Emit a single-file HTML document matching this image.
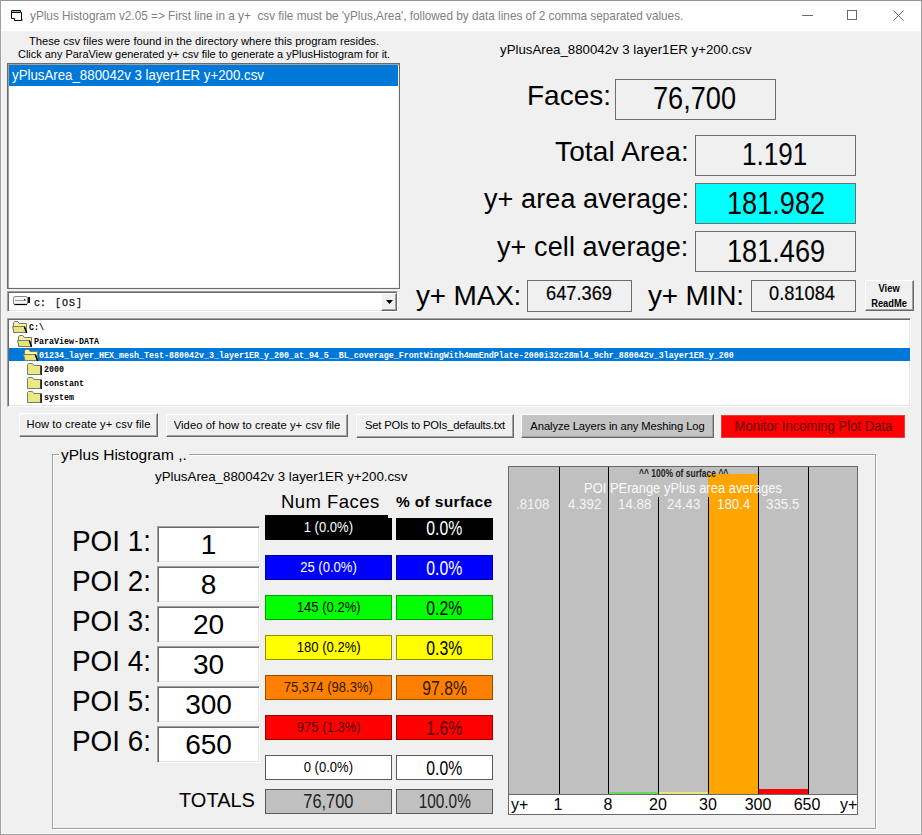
<!DOCTYPE html>
<html><head><meta charset="utf-8">
<style>
*{box-sizing:border-box;margin:0;padding:0}
html,body{width:922px;height:835px;overflow:hidden;background:#f0f0f0;font-family:"Liberation Sans",sans-serif;}
.a{position:absolute;white-space:pre}
#win{position:absolute;left:0;top:0;width:922px;height:835px;background:#f0f0f0}
#title{position:absolute;left:0;top:0;width:922px;height:31px;background:#fff}
.box{position:absolute;border:1px solid #6d6d6d;background:#f0f0f0;text-align:center;color:#000}
.btn{position:absolute;background:#f0f0f0;border-top:1px solid #fff;border-left:1px solid #fff;border-right:1px solid #696969;border-bottom:1px solid #696969;box-shadow:inset -1px -1px 0 #a0a0a0;font-size:11.2px;text-align:center;color:#000}
.sunk{position:absolute;background:#fff;border-top:1px solid #a0a0a0;border-left:1px solid #a0a0a0;border-right:1px solid #fff;border-bottom:1px solid #fff;box-shadow:inset 1px 1px 0 #696969, inset -1px -1px 0 #e3e3e3}
.lbl{position:absolute;white-space:pre;color:#000}
.bar{position:absolute;border:1px solid #7a7a7a;text-align:center;white-space:pre}
.vl{position:absolute;width:1px;background:#000}
.mono{font-family:"Liberation Mono",monospace;font-weight:bold;font-size:8.33px;color:#000}
</style></head><body>
<div id="win"></div>
<div id="title"></div>
<div style="position:absolute;left:1px;top:31px;width:1px;height:803px;background:#f8f8f8"></div>
<div style="position:absolute;left:920px;top:31px;width:1px;height:803px;background:#f8f8f8"></div>
<div style="position:absolute;left:1px;top:833px;width:920px;height:1px;background:#f8f8f8"></div>
<div style="position:absolute;left:0;top:0;width:922px;height:1px;background:#959595"></div>
<div style="position:absolute;left:0;top:0;width:1px;height:835px;background:#a0a0a0"></div>
<div style="position:absolute;left:921px;top:0;width:1px;height:835px;background:#a0a0a0"></div>
<div style="position:absolute;left:0;top:834px;width:922px;height:1px;background:#a0a0a0"></div>

<!-- title icon -->
<svg class="a" style="left:10px;top:9px" width="14" height="13" viewBox="0 0 14 13">
<path d="M1.5 1.5 H10.5 V3.5 H11.5 V11.5 H4.5 V9.5 H1.5 Z" fill="#fff" stroke="#000" stroke-width="1"/>
<path d="M2 2.5 H10" stroke="#6cc" stroke-width="1"/>
<path d="M2 3.5 H10" stroke="#000" stroke-width="1"/>
<path d="M12 10 L13 11 L12 12" fill="none" stroke="#888" stroke-width="0.8"/>
</svg>
<div class="lbl" style="left:30px;top:9px;font-size:12.2px;color:#808080;transform:scaleX(0.966);transform-origin:0 0">yPlus Histogram v2.05 =&gt; First line in a y+  csv file must be 'yPlus,Area', followed by data lines of 2 comma separated values.</div>
<!-- window buttons -->
<div style="position:absolute;left:802px;top:15px;width:11px;height:1px;background:#6a6a6a"></div>
<div style="position:absolute;left:847px;top:10px;width:10px;height:10px;border:1px solid #6a6a6a"></div>
<svg class="a" style="left:893px;top:10px" width="11" height="11" viewBox="0 0 11 11"><path d="M0.5 0.5 L10.5 10.5 M10.5 0.5 L0.5 10.5" stroke="#6a6a6a" stroke-width="1"/></svg>

<!-- left instructions -->
<div class="lbl" style="left:29px;top:35px;font-size:11.2px">These csv files were found in the directory where this program resides.</div>
<div class="lbl" style="left:18px;top:48px;font-size:10.95px">Click any ParaView generated y+ csv file to generate a yPlusHistogram for it.</div>

<!-- file listbox -->
<div style="position:absolute;left:7px;top:63px;width:393px;height:226px;background:#fff;border:1px solid #6a6a6a;box-shadow:inset 1px 1px 0 #a0a0a0, inset -1px -1px 0 #f0f0f0"></div>
<div style="position:absolute;left:9px;top:65px;width:389px;height:21px;background:#0078d7"></div>
<div class="lbl" style="left:12px;top:67px;font-size:14px;color:#fff;transform:scaleX(0.948);transform-origin:0 0">yPlusArea_880042v 3 layer1ER y+200.csv</div>

<!-- right panel -->
<div class="lbl" style="left:500px;top:42px;font-size:13.6px;transform:scaleX(0.975);transform-origin:0 0">yPlusArea_880042v 3 layer1ER y+200.csv</div>
<div class="lbl" style="left:527px;top:80px;font-size:28px">Faces:</div>
<div class="box" style="left:615px;top:79px;width:161px;height:41px"></div>

<div class="lbl" style="left:555px;top:136px;font-size:28px;letter-spacing:0.15px">Total Area:</div>
<div class="box" style="left:695px;top:135px;width:161px;height:41px"></div>
<div class="lbl" style="left:484px;top:184px;font-size:27px;letter-spacing:0.1px">y+ area average:</div>
<div class="box" style="left:695px;top:183px;width:161px;height:41px;background:#00ffff"></div>
<div class="lbl" style="left:497px;top:232px;font-size:27px;letter-spacing:0.1px">y+ cell average:</div>
<div class="box" style="left:695px;top:231px;width:161px;height:41px"></div>

<div class="lbl" style="left:416px;top:280px;font-size:28px;letter-spacing:-0.2px">y+ MAX:</div>
<div class="box" style="left:527px;top:280px;width:105px;height:32px"></div>
<div class="lbl" style="left:648px;top:280px;font-size:28px;letter-spacing:-0.2px">y+ MIN:</div>
<div class="box" style="left:751px;top:280px;width:105px;height:32px"></div>
<div class="btn" style="left:865px;top:280px;width:49px;height:31px"></div><div class="lbl" style="left:865px;top:281px;width:49px;text-align:center;font-size:11px;font-weight:bold;line-height:14.5px"><span style="display:inline-block;transform:scaleX(0.85)">View<br>ReadMe</span></div>

<!-- drive combo -->
<div class="sunk" style="left:7px;top:291px;width:391px;height:21px"></div>
<div class="btn" style="left:381px;top:293px;width:16px;height:18px"></div>
<svg class="a" style="left:386px;top:300px" width="8" height="4" viewBox="0 0 8 4"><path d="M0 0 H7 L3.5 4 Z" fill="#000"/></svg>

<!-- dir list -->
<div class="sunk" style="left:7px;top:318px;width:904px;height:89px"></div>
<div style="position:absolute;left:9px;top:348px;width:901px;height:13px;background:#0078d7"></div>

<!-- buttons -->
<div class="btn" style="left:19px;top:413px;width:139px;height:24px;line-height:21px;letter-spacing:0.1px">How to create y+ csv file</div>
<div class="btn" style="left:166px;top:414px;width:182px;height:23px;line-height:21px;letter-spacing:0.09px">Video of how to create y+ csv file</div>
<div class="btn" style="left:356px;top:414px;width:158px;height:24px;line-height:21px;letter-spacing:-0.19px">Set POIs to POIs_defaults.txt</div>
<div class="btn" style="left:521px;top:414px;width:193px;height:24px;line-height:22px;background:#c4c4c4;letter-spacing:-0.07px">Analyze Layers in any Meshing Log</div>
<div style="position:absolute;left:721px;top:415px;width:184px;height:23px;background:#ff0000;border:1px solid #e04040;color:#600000;font-size:14px;text-align:center;line-height:21px;white-space:pre"><span style="display:inline-block;transform:scaleX(0.935)">Monitor Incoming Plot Data</span></div>

<!-- group frame -->
<div style="position:absolute;left:52px;top:454px;width:824px;height:375px;border:1px solid #a0a0a0;box-shadow:1px 1px 0 #fff, inset 1px 1px 0 #fff"></div>
<div class="lbl" style="left:59px;top:446px;font-size:15.5px;background:#f0f0f0;padding:0 2px">yPlus Histogram ,.</div>
<div class="lbl" style="left:155px;top:469px;font-size:13.3px">yPlusArea_880042v 3 layer1ER y+200.csv</div>

<!-- values -->
<div class="lbl" style="left:653px;top:81px;font-size:31px;transform:scaleX(0.875);transform-origin:0 0">76,700</div>
<div class="lbl" style="left:742px;top:137px;font-size:31px;transform:scaleX(0.84);transform-origin:0 0">1.191</div>
<div class="lbl" style="left:727px;top:186px;font-size:31px;transform:scaleX(0.875);transform-origin:0 0">181.982</div>
<div class="lbl" style="left:727px;top:234px;font-size:31px;transform:scaleX(0.875);transform-origin:0 0">181.469</div>
<div class="lbl" style="left:546px;top:281px;font-size:20.5px;transform:scaleX(0.89);transform-origin:0 0;-webkit-text-stroke:0.2px #000">647.369</div>
<div class="lbl" style="left:769px;top:281px;font-size:20.5px;transform:scaleX(0.89);transform-origin:0 0;-webkit-text-stroke:0.2px #000">0.81084</div>

<!-- drive combo content -->
<svg class="a" style="left:13px;top:295px" width="18" height="11" viewBox="0 0 18 11">
<rect x="0.5" y="1.5" width="14" height="8" rx="1.5" fill="#f4f4f4" stroke="#8a8a8a"/>
<path d="M1.5 9.5 H14" stroke="#000" stroke-width="1.2"/>
<path d="M2 5.5 H13" stroke="#9a9a9a" stroke-width="1"/>
<rect x="11" y="4" width="1.2" height="1.2" fill="#222"/>
<rect x="15" y="2" width="2" height="6" fill="#111"/>
</svg>
<div class="lbl mono" style="left:34px;top:298px;font-size:10px;font-weight:normal;color:#111;-webkit-text-stroke:0.25px #111">c:</div><div class="lbl mono" style="left:55px;top:298px;font-size:10px;font-weight:normal;color:#111;letter-spacing:1px;-webkit-text-stroke:0.25px #111">[OS]</div>

<!-- dir list items -->
<svg class="a" style="left:12px;top:321px" width="16" height="13" viewBox="0 0 16 13"><path d="M1.5 11.5 V2 L2.5 0.5 H6 L7 2.5 H14.5 V11.5 Z" fill="#f4f4a0" stroke="#7a7a7a" stroke-width="1"/><path d="M0.5 5.5 H12.5 L14.5 11.5 H2 Z" fill="#e6e670" stroke="#7a7a7a" stroke-width="1"/><path d="M12.3 5.5 L14.6 12" stroke="#000" stroke-width="1.4"/></svg>
<div class="lbl mono" style="left:29px;top:323px;color:#000">C:\</div>
<svg class="a" style="left:17px;top:335px" width="16" height="13" viewBox="0 0 16 13"><path d="M1.5 11.5 V2 L2.5 0.5 H6 L7 2.5 H14.5 V11.5 Z" fill="#f4f4a0" stroke="#7a7a7a" stroke-width="1"/><path d="M0.5 5.5 H12.5 L14.5 11.5 H2 Z" fill="#e6e670" stroke="#7a7a7a" stroke-width="1"/><path d="M12.3 5.5 L14.6 12" stroke="#000" stroke-width="1.4"/></svg>
<div class="lbl mono" style="left:34px;top:337px;color:#000">ParaView-DATA</div>
<svg class="a" style="left:23px;top:349px" width="16" height="13" viewBox="0 0 16 13"><path d="M1.5 11.5 V2 L2.5 0.5 H6 L7 2.5 H14.5 V11.5 Z" fill="#f4f4a0" stroke="#7a7a7a" stroke-width="1"/><path d="M0.5 5.5 H12.5 L14.5 11.5 H2 Z" fill="#e6e670" stroke="#7a7a7a" stroke-width="1"/><path d="M12.3 5.5 L14.6 12" stroke="#000" stroke-width="1.4"/></svg>
<div class="lbl mono" style="left:39px;top:351px;color:#fff">01234_layer_HEX_mesh_Test-880042v_3_layer1ER_y_200_at_94_5__BL_coverage_FrontWingWith4mmEndPlate-2000i32c28ml4_9chr_880042v_3layer1ER_y_200</div>
<svg class="a" style="left:27px;top:363px" width="16" height="13" viewBox="0 0 16 13"><path d="M0.5 11.5 V1.5 L1.5 0.5 H5.5 L7 2.5 H13.5 V11.5 Z" fill="#eaea80" stroke="#7a7a7a" stroke-width="1"/><path d="M14.2 2.5 V12" fill="none" stroke="#000" stroke-width="1.3"/></svg>
<div class="lbl mono" style="left:44px;top:365px;color:#000">2000</div>
<svg class="a" style="left:27px;top:377px" width="16" height="13" viewBox="0 0 16 13"><path d="M0.5 11.5 V1.5 L1.5 0.5 H5.5 L7 2.5 H13.5 V11.5 Z" fill="#eaea80" stroke="#7a7a7a" stroke-width="1"/><path d="M14.2 2.5 V12" fill="none" stroke="#000" stroke-width="1.3"/></svg>
<div class="lbl mono" style="left:44px;top:379px;color:#000">constant</div>
<svg class="a" style="left:27px;top:391px" width="16" height="13" viewBox="0 0 16 13"><path d="M0.5 11.5 V1.5 L1.5 0.5 H5.5 L7 2.5 H13.5 V11.5 Z" fill="#eaea80" stroke="#7a7a7a" stroke-width="1"/><path d="M14.2 2.5 V12" fill="none" stroke="#000" stroke-width="1.3"/></svg>
<div class="lbl mono" style="left:44px;top:393px;color:#000">system</div>


<!-- POI labels and boxes -->
<div class="lbl" style="left:72px;top:525px;font-size:29px;transform:scaleX(0.96);transform-origin:0 0">POI 1:</div>
<div class="sunk" style="left:157px;top:526px;width:103px;height:37px;font-size:28px;text-align:center;line-height:35px;color:#000">1</div>
<div class="lbl" style="left:72px;top:565px;font-size:29px;transform:scaleX(0.96);transform-origin:0 0">POI 2:</div>
<div class="sunk" style="left:157px;top:566px;width:103px;height:37px;font-size:28px;text-align:center;line-height:35px;color:#000">8</div>
<div class="lbl" style="left:72px;top:605px;font-size:29px;transform:scaleX(0.96);transform-origin:0 0">POI 3:</div>
<div class="sunk" style="left:157px;top:606px;width:103px;height:37px;font-size:28px;text-align:center;line-height:35px;color:#000">20</div>
<div class="lbl" style="left:72px;top:645px;font-size:29px;transform:scaleX(0.96);transform-origin:0 0">POI 4:</div>
<div class="sunk" style="left:157px;top:646px;width:103px;height:37px;font-size:28px;text-align:center;line-height:35px;color:#000">30</div>
<div class="lbl" style="left:72px;top:685px;font-size:29px;transform:scaleX(0.96);transform-origin:0 0">POI 5:</div>
<div class="sunk" style="left:157px;top:686px;width:103px;height:37px;font-size:28px;text-align:center;line-height:35px;color:#000">300</div>
<div class="lbl" style="left:72px;top:725px;font-size:29px;transform:scaleX(0.96);transform-origin:0 0">POI 6:</div>
<div class="sunk" style="left:157px;top:726px;width:103px;height:37px;font-size:28px;text-align:center;line-height:35px;color:#000">650</div>
<div class="bar" style="left:265px;top:515px;width:127px;height:25px;background:#000;border-color:#000"></div><div style="position:absolute;left:388px;top:515px;width:4px;height:3px;background:#f0f0f0"></div>
<div class="lbl" style="left:265px;top:518px;width:127px;text-align:center;font-size:15px;color:#fff;"><span style="display:inline-block;transform:scaleX(0.87)">1 (0.0%)</span></div>
<div class="bar" style="left:396px;top:518px;width:97px;height:22px;background:#000;border-color:#000"></div>
<div class="lbl" style="left:396px;top:517px;width:97px;text-align:center;font-size:19.5px;color:#fff;"><span style="display:inline-block;transform:scaleX(0.81)">0.0%</span></div>
<div class="bar" style="left:265px;top:555px;width:127px;height:25px;background:#0000ff;border-color:#0000a0"></div>
<div class="lbl" style="left:265px;top:558px;width:127px;text-align:center;font-size:15px;color:#fff;"><span style="display:inline-block;transform:scaleX(0.87)">25 (0.0%)</span></div>
<div class="bar" style="left:396px;top:555px;width:97px;height:25px;background:#0000ff;border-color:#0000a0"></div>
<div class="lbl" style="left:396px;top:557px;width:97px;text-align:center;font-size:19.5px;color:#fff;"><span style="display:inline-block;transform:scaleX(0.81)">0.0%</span></div>
<div class="bar" style="left:265px;top:595px;width:127px;height:25px;background:#00ff00;border-color:#00a000"></div>
<div class="lbl" style="left:265px;top:598px;width:127px;text-align:center;font-size:15px;color:#000;"><span style="display:inline-block;transform:scaleX(0.87)">145 (0.2%)</span></div>
<div class="bar" style="left:396px;top:595px;width:97px;height:25px;background:#00ff00;border-color:#00a000"></div>
<div class="lbl" style="left:396px;top:597px;width:97px;text-align:center;font-size:19.5px;color:#000;"><span style="display:inline-block;transform:scaleX(0.81)">0.2%</span></div>
<div class="bar" style="left:265px;top:635px;width:127px;height:25px;background:#ffff00;border-color:#909000"></div>
<div class="lbl" style="left:265px;top:638px;width:127px;text-align:center;font-size:15px;color:#000;"><span style="display:inline-block;transform:scaleX(0.87)">180 (0.2%)</span></div>
<div class="bar" style="left:396px;top:635px;width:97px;height:25px;background:#ffff00;border-color:#909000"></div>
<div class="lbl" style="left:396px;top:637px;width:97px;text-align:center;font-size:19.5px;color:#000;"><span style="display:inline-block;transform:scaleX(0.81)">0.3%</span></div>
<div class="bar" style="left:265px;top:675px;width:127px;height:25px;background:#ff8000;border-color:#905000"></div>
<div class="lbl" style="left:265px;top:678px;width:127px;text-align:center;font-size:15px;color:#301800;"><span style="display:inline-block;transform:scaleX(0.87)">75,374 (98.3%)</span></div>
<div class="bar" style="left:396px;top:675px;width:97px;height:25px;background:#ff8000;border-color:#905000"></div>
<div class="lbl" style="left:396px;top:677px;width:97px;text-align:center;font-size:19.5px;color:#301800;"><span style="display:inline-block;transform:scaleX(0.81)">97.8%</span></div>
<div class="bar" style="left:265px;top:715px;width:127px;height:25px;background:#ff0000;border-color:#a00000"></div>
<div class="lbl" style="left:265px;top:718px;width:127px;text-align:center;font-size:15px;color:#500000;"><span style="display:inline-block;transform:scaleX(0.87)">975 (1.3%)</span></div>
<div class="bar" style="left:396px;top:715px;width:97px;height:25px;background:#ff0000;border-color:#a00000"></div>
<div class="lbl" style="left:396px;top:717px;width:97px;text-align:center;font-size:19.5px;color:#500000;"><span style="display:inline-block;transform:scaleX(0.81)">1.6%</span></div>
<div class="bar" style="left:265px;top:755px;width:127px;height:25px;background:#ffffff;border-color:#5a5a5a"></div>
<div class="lbl" style="left:265px;top:758px;width:127px;text-align:center;font-size:15px;color:#000;"><span style="display:inline-block;transform:scaleX(0.87)">0 (0.0%)</span></div>
<div class="bar" style="left:396px;top:755px;width:97px;height:25px;background:#ffffff;border-color:#5a5a5a"></div>
<div class="lbl" style="left:396px;top:757px;width:97px;text-align:center;font-size:19.5px;color:#000;"><span style="display:inline-block;transform:scaleX(0.81)">0.0%</span></div>
<div class="bar" style="left:265px;top:789px;width:127px;height:25px;background:#c0c0c0;border-color:#5a5a5a"></div>
<div class="lbl" style="left:265px;top:789px;width:127px;text-align:center;font-size:20.5px;color:#222"><span style="display:inline-block;transform:scaleX(0.8)">76,700</span></div>
<div class="bar" style="left:396px;top:789px;width:97px;height:25px;background:#c0c0c0;border-color:#5a5a5a"></div>
<div class="lbl" style="left:396px;top:789px;width:97px;text-align:center;font-size:20.5px;color:#222"><span style="display:inline-block;transform:scaleX(0.75)">100.0%</span></div>
<div class="lbl" style="left:179px;top:789px;font-size:20px">TOTALS</div>
<div class="lbl" style="left:281px;top:491px;font-size:18.5px;letter-spacing:0.45px">Num Faces</div>
<div class="lbl" style="left:396px;top:493px;font-size:15.5px;font-weight:bold;letter-spacing:0.35px">% of surface</div>

<!-- chart -->
<div style="position:absolute;left:508px;top:466px;width:350px;height:349px;background:#c0c0c0;border:1px solid #6a6a6a"></div>
<div style="position:absolute;left:509px;top:794px;width:348px;height:20px;background:#fff;border-top:1px solid #6a6a6a"></div>
<div style="position:absolute;left:708px;top:474px;width:50px;height:320px;background:#ffa500"></div>
<div style="position:absolute;left:609px;top:792px;width:49px;height:2px;background:#60dd60"></div>
<div style="position:absolute;left:659px;top:792px;width:49px;height:2px;background:#e8e880"></div>
<div style="position:absolute;left:759px;top:789px;width:49px;height:5px;background:#ff0000"></div>
<div class="vl" style="left:559px;top:467px;height:327px"></div>
<div class="vl" style="left:608px;top:467px;height:327px"></div>
<div class="vl" style="left:658px;top:497px;height:297px"></div>
<div class="vl" style="left:708px;top:497px;height:297px"></div>
<div class="vl" style="left:758px;top:467px;height:327px"></div>
<div class="vl" style="left:808px;top:467px;height:327px"></div>
<div class="lbl" style="left:639px;top:468px;font-size:10px;font-weight:bold;color:#222;transform:scaleX(0.85);transform-origin:0 0">^^ 100% of surface ^^</div>
<div class="lbl" style="left:584px;top:480px;font-size:14px;color:#fafafa;transform:scaleX(0.925);transform-origin:0 0">POI PErange yPlus area averages</div>
<div class="lbl" style="left:516px;top:496px;font-size:14px;color:#f4f4f4;transform:scaleX(0.95);transform-origin:0 0">.8108</div>
<div class="lbl" style="left:568px;top:496px;font-size:14px;color:#f4f4f4;transform:scaleX(0.95);transform-origin:0 0">4.392</div>
<div class="lbl" style="left:618px;top:496px;font-size:14px;color:#f4f4f4;transform:scaleX(0.95);transform-origin:0 0">14.88</div>
<div class="lbl" style="left:667px;top:496px;font-size:14px;color:#f4f4f4;transform:scaleX(0.95);transform-origin:0 0">24.43</div>
<div class="lbl" style="left:717px;top:496px;font-size:14px;color:#f4f4f4;transform:scaleX(0.95);transform-origin:0 0">180.4</div>
<div class="lbl" style="left:766px;top:496px;font-size:14px;color:#f4f4f4;transform:scaleX(0.95);transform-origin:0 0">335.5</div>
<div class="lbl" style="left:511px;top:796px;font-size:16px">y+</div>
<div class="lbl" style="left:528px;top:796px;width:60px;text-align:center;font-size:16px">1</div>
<div class="lbl" style="left:578px;top:796px;width:60px;text-align:center;font-size:16px">8</div>
<div class="lbl" style="left:628px;top:796px;width:60px;text-align:center;font-size:16px">20</div>
<div class="lbl" style="left:678px;top:796px;width:60px;text-align:center;font-size:16px">30</div>
<div class="lbl" style="left:728px;top:796px;width:60px;text-align:center;font-size:16px">300</div>
<div class="lbl" style="left:777px;top:796px;width:60px;text-align:center;font-size:16px">650</div>
<div class="lbl" style="left:840px;top:796px;font-size:16px">y+</div>

</body></html>
